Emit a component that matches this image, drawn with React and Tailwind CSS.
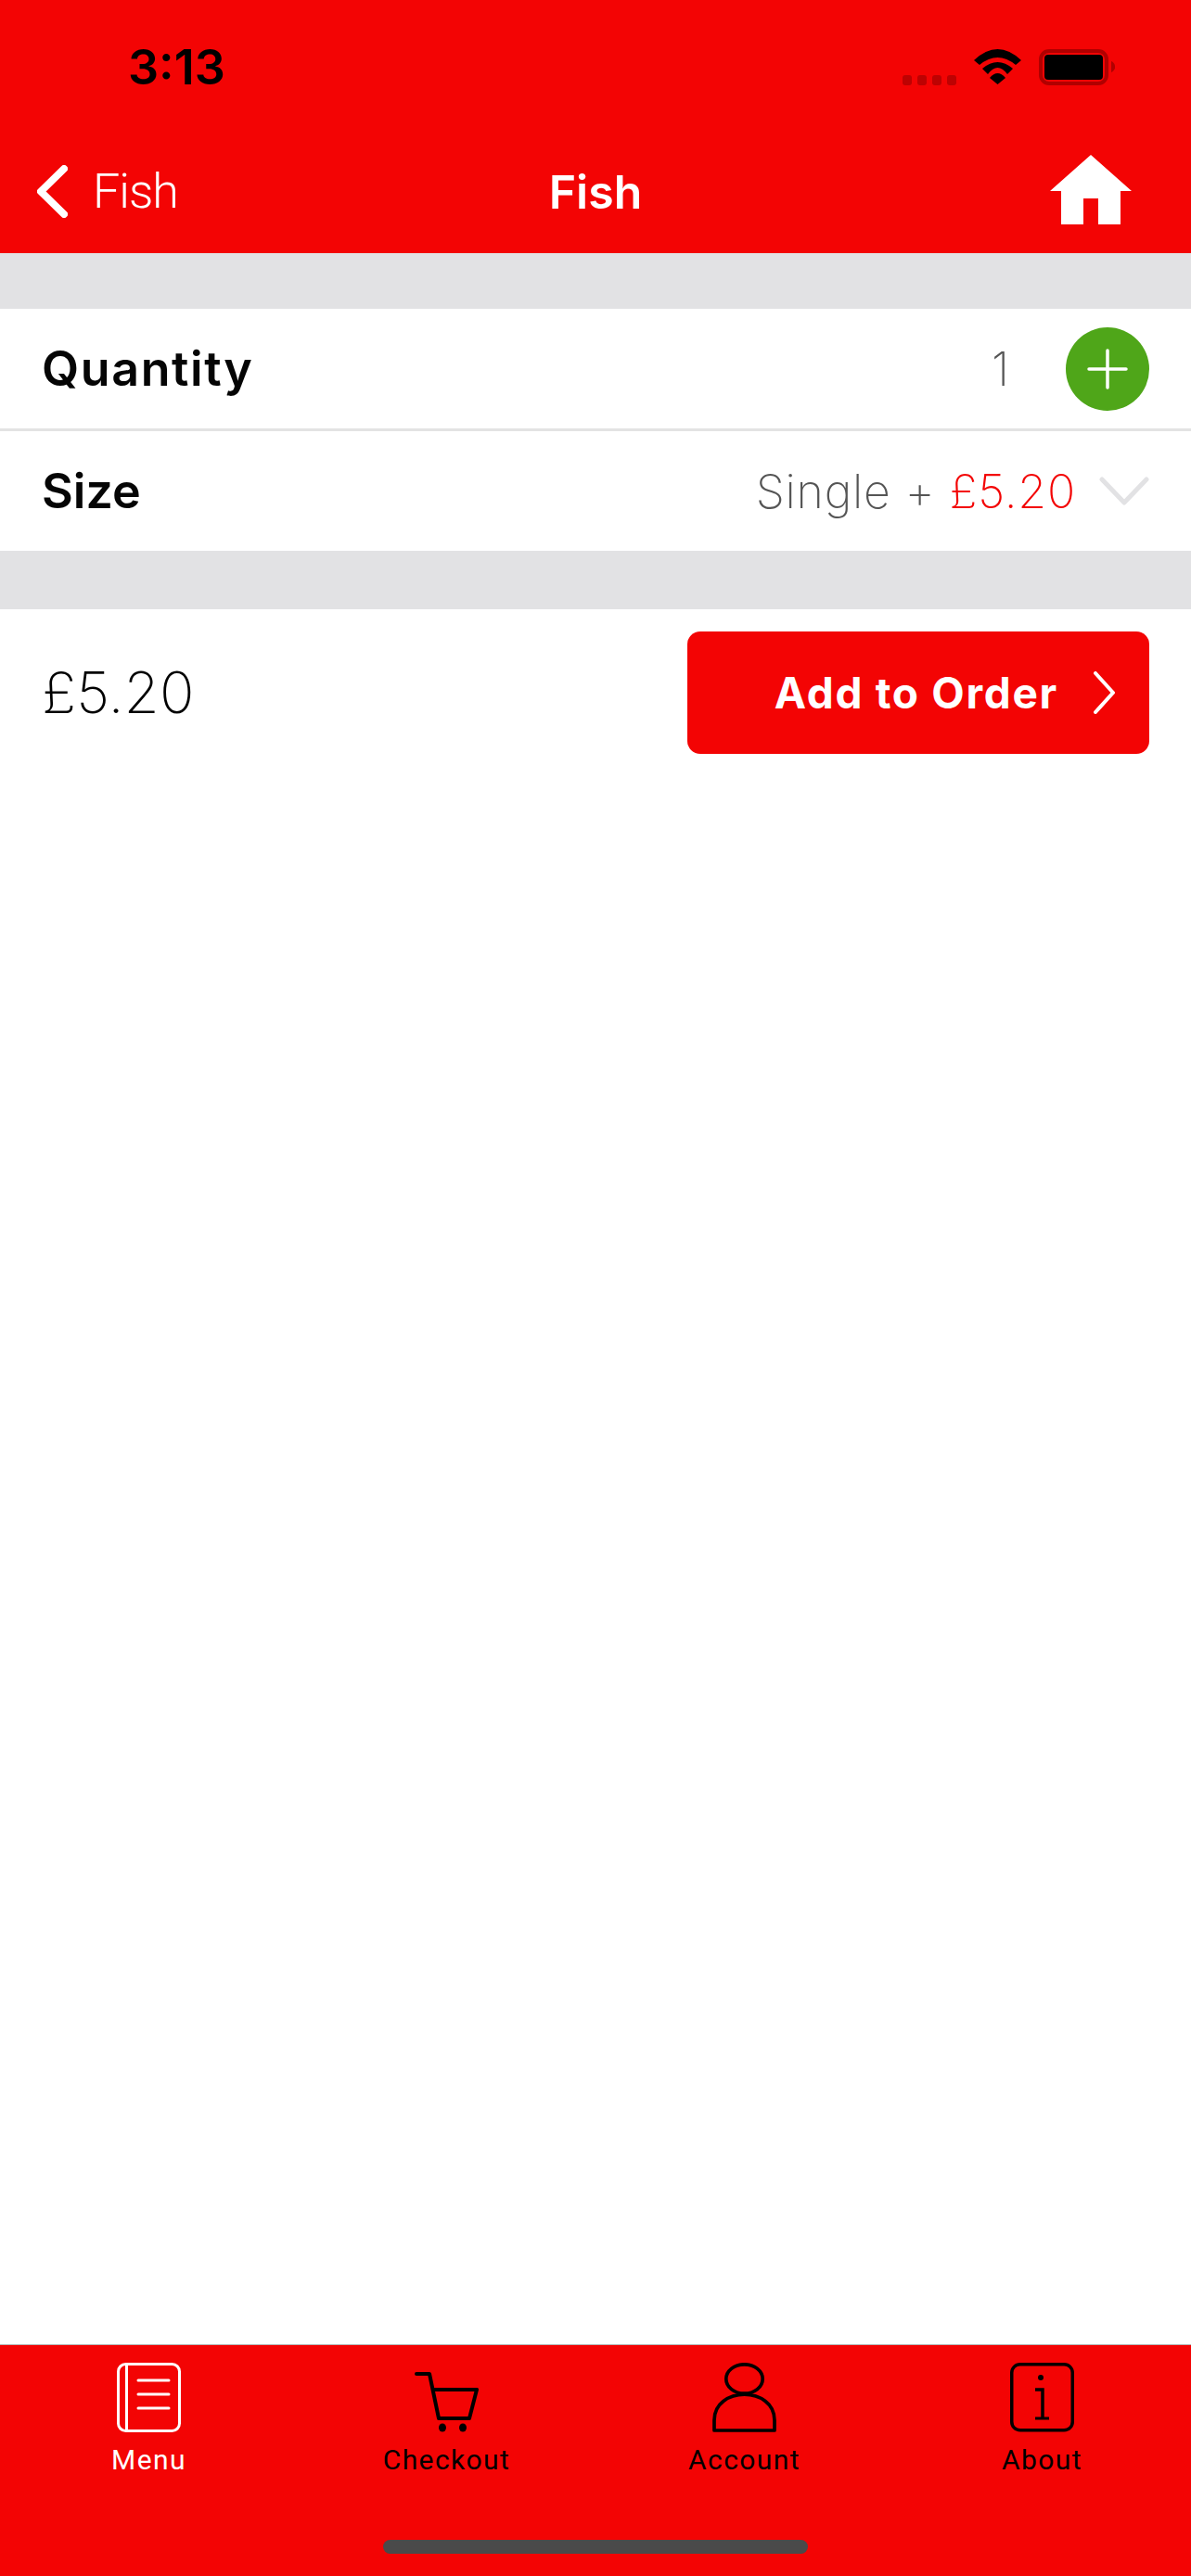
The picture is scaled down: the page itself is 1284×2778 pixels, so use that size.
function StatusIcons() {
  return (
    <svg width="229" height="39" viewBox="973 53 229 39" fill="none">
      {[973, 989, 1005, 1021].map((x) => (
        <rect key={x} x={x} y="81" width="10" height="11" rx="3" fill="#bd0202" />
      ))}
      <path d="M1050 65 Q1075.5 41 1101 65 L1095 70 Q1075.5 54 1056 70 Z" fill="#000" />
      <path d="M1059 74 Q1075.5 60 1092 74 L1086 80 Q1075.5 66 1065 80 Z" fill="#000" />
      <path d="M1067 84 Q1075.5 74 1084 84 L1075.5 91 Z" fill="#000" />
      <rect x="1122" y="55" width="71" height="35" rx="9" stroke="#b00000" strokeWidth="4" />
      <rect x="1126" y="59" width="63" height="27" rx="4" fill="#000" />
      <path d="M1198 66 C1203.5 68 1203.5 76 1198 78 Z" fill="#b00000" />
    </svg>
  );
}

function BackChevron() {
  return (
    <svg width="33" height="57" viewBox="0 0 33 57" fill="none">
      <path d="M29 4 L4 28.5 L29 53" stroke="#fff" strokeWidth="8" strokeLinecap="round" strokeLinejoin="round" />
    </svg>
  );
}

function HomeIcon() {
  return (
    <svg width="88" height="75" viewBox="1132 167 88 75">
      <path d="M1176 167 L1220 206 L1208 206 L1208 242 L1184 242 L1184 214 L1168 214 L1168 242 L1144 242 L1144 206 L1132 206 Z" fill="#fff" />
    </svg>
  );
}

function MenuIcon() {
  return (
    <svg width="70" height="75" viewBox="125 2548 70 75" fill="none" stroke="#fff" strokeWidth="3" strokeLinecap="round">
      <rect x="126.5" y="2549.5" width="66" height="72" rx="8" />
      <path d="M135.5 2550 V2621" />
      <path d="M148 2567 H181 M148 2582 H181 M148 2597 H181" />
    </svg>
  );
}

function CartIcon() {
  return (
    <svg width="70" height="75" viewBox="447 2548 70 75" fill="none" stroke="#000" strokeWidth="4" strokeLinecap="round" strokeLinejoin="round">
      <path d="M449 2560 H463 L473 2608 H506 L514 2577 H467" />
      <ellipse cx="477" cy="2618" rx="4" ry="4.5" fill="#000" stroke="none" />
      <ellipse cx="499" cy="2618" rx="4" ry="4.5" fill="#000" stroke="none" />
    </svg>
  );
}

function PersonIcon() {
  return (
    <svg width="70" height="75" viewBox="768 2548 70 75" fill="none" stroke="#000" strokeWidth="3.7" strokeLinejoin="round">
      <ellipse cx="802.5" cy="2565.5" rx="19.7" ry="15.7" />
      <path d="M770 2621 V2610 C770 2573 835 2573 835 2610 V2621 Z" />
    </svg>
  );
}

function InfoIcon() {
  return (
    <svg width="70" height="75" viewBox="1089 2548 70 75" fill="none" stroke="#000" strokeWidth="3.5">
      <rect x="1090.75" y="2549.75" width="65.5" height="71" rx="9" />
      <circle cx="1122" cy="2564" r="3" fill="#000" stroke="none" />
      <path d="M1116 2577 H1124 V2608" strokeWidth="3.5" />
      <path d="M1116 2608 H1131" strokeWidth="3" />
    </svg>
  );
}

function Tab({ icon, label, active }) {
  return (
    <div className="flex flex-col items-center">
      {icon}
      <span className={`mt-[12px] text-[30px] leading-[36px] tracking-[1.4px] ${active ? "text-white" : "text-black"}`}>{label}</span>
    </div>
  );
}

export default function App() {
  return (
    <div className="flex h-[2778px] w-[1284px] flex-col bg-white font-['Inter',sans-serif]">
      <header className="h-[273px] bg-[#f30404]">
        <div className="flex h-[150px] items-start justify-between pl-[138px] pr-[82px] pt-[53px]">
          <span className="text-[52px] font-semibold leading-[39px] text-black">3:13</span>
          <StatusIcons />
        </div>
        <div className="grid h-[123px] grid-cols-[1fr_auto_1fr] items-center pb-[10px] pl-[40px] pr-[40px]">
          <div className="flex items-center gap-[27px]">
            <BackChevron />
            <span className="font-['Roboto',sans-serif] text-[52px] font-light leading-none tracking-[-1px] text-white">Fish</span>
          </div>
          <span className="text-[50px] font-semibold leading-none text-white">Fish</span>
          <div className="flex justify-end pb-[4px] pr-[24px]">
            <HomeIcon />
          </div>
        </div>
      </header>

      <div className="h-[60px] bg-[#e2e2e4]" />

      <div className="flex h-[129px] items-center justify-between pl-[45px] pr-[45px]">
        <span className="text-[52px] font-semibold leading-none tracking-[1.6px] text-[#050505]">Quantity</span>
        <div className="flex items-center gap-[61px]">
          <span className="text-[50px] font-extralight leading-none text-[#555]">1</span>
          <div className="flex h-[90px] w-[90px] items-center justify-center rounded-full bg-[#4fa619]">
            <svg width="44" height="44" viewBox="0 0 44 44" stroke="#fff" strokeWidth="3.5" strokeLinecap="round">
              <path d="M22 2 V42 M2 22 H42" />
            </svg>
          </div>
        </div>
      </div>
      <div className="h-[3px] bg-[#e3e3e3]" />
      <div className="flex h-[129px] items-center justify-between pl-[45px] pr-[45px]">
        <span className="text-[52px] font-semibold leading-none text-[#050505]">Size</span>
        <div className="flex items-center gap-[25px]">
          <span className="text-[50px] font-extralight leading-none tracking-[0.8px] text-[#555]">
            Single + <span className="text-[#f30404]">£5.20</span>
          </span>
          <svg width="54" height="31" viewBox="0 0 54 31" fill="none" stroke="#e2e2e4" strokeWidth="5" strokeLinecap="round" strokeLinejoin="round">
            <path d="M3 3 L27 28 L51 3" />
          </svg>
        </div>
      </div>

      <div className="h-[63px] bg-[#e2e2e4]" />

      <div className="flex items-center justify-between pl-[45px] pr-[45px] pt-[24px]">
        <span className="text-[62px] font-extralight leading-none text-black">£5.20</span>
        <div className="flex h-[132px] w-[498px] items-center justify-end gap-[38px] rounded-[14px] bg-[#f30404] pr-[37px]">
          <span className="text-[46px] font-bold leading-none tracking-[1.7px] text-white">Add to Order</span>
          <svg width="23" height="46" viewBox="0 0 23 46" fill="none" stroke="#fff" strokeWidth="4" strokeLinecap="round" strokeLinejoin="round">
            <path d="M2 2 L21 23 L2 44" />
          </svg>
        </div>
      </div>

      <div className="flex-1" />

      <footer className="flex h-[250px] flex-col border-t border-[#b5b5b5] bg-[#f30404] pt-[19px]">
        <div className="grid grid-cols-4 font-['Roboto',sans-serif]">
          <Tab icon={<MenuIcon />} label="Menu" active />
          <Tab icon={<CartIcon />} label="Checkout" />
          <Tab icon={<PersonIcon />} label="Account" />
          <Tab icon={<InfoIcon />} label="About" />
        </div>
        <div className="mx-auto mb-[24px] mt-auto h-[15px] w-[458px] rounded-full bg-[#4a4a4a]" />
      </footer>
    </div>
  );
}
